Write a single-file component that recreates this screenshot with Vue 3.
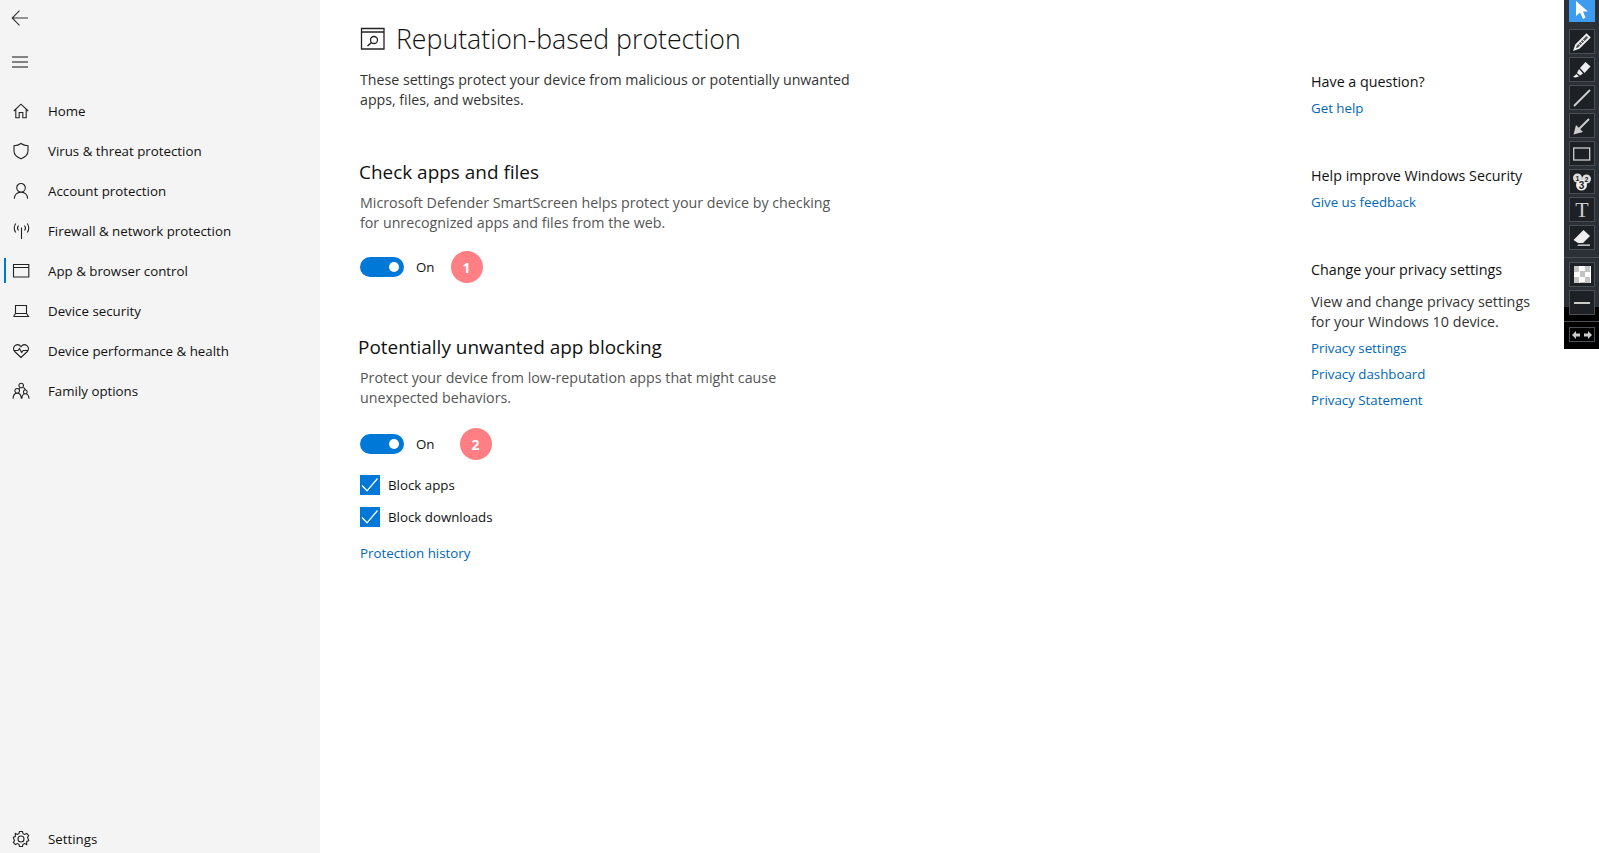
<script setup>
const navItems = [
  { label: "Home", icon: "home" },
  { label: "Virus & threat protection", icon: "shield" },
  { label: "Account protection", icon: "user" },
  { label: "Firewall & network protection", icon: "wifi" },
  { label: "App & browser control", icon: "app", active: true },
  { label: "Device security", icon: "laptop" },
  { label: "Device performance & health", icon: "heart" },
  { label: "Family options", icon: "family" },
];

const privacyLinks = ["Privacy settings", "Privacy dashboard", "Privacy Statement"];

const tools = ["pencil", "marker", "line", "arrow", "rect", "numbers", "text", "eraser"];
</script>

<template>
  <div class="page">
    <aside class="sidebar">
      <button class="top-btn back">
        <svg width="18" height="16" viewBox="0 0 18 16" fill="none" stroke="#333" stroke-width="1.1">
          <path d="M8.500 .7 1.200 8l7.300 7.300M1.200 8H17" />
        </svg>
      </button>
      <button class="top-btn burger">
        <svg width="18" height="12" viewBox="0 0 18 12" fill="none" stroke="#111" stroke-width="1.1">
          <path d="M1 1h16M1 6h16M1 11h16" />
        </svg>
      </button>
      <nav class="nav">
        <div v-for="item in navItems" :key="item.label" class="nav-row" :class="{ active: item.active }">
          <svg class="nav-icon" width="18" height="18" viewBox="0 0 18 18" fill="none" stroke="#222" stroke-width="1.1">
            <path v-if="item.icon === 'home'" d="M1.800 9 9 2.200 16.200 9M3.800 7.500V15.800H7.200V10.500H10.800V15.800H14.200V7.500" />
            <path v-else-if="item.icon === 'shield'" d="M9 1.500C11 3 13.500 3.700 16 3.700V9C16 12.800 13 15.200 9 16.800 5 15.200 2 12.800 2 9V3.700C4.500 3.700 7 3 9 1.500Z" />
            <path v-else-if="item.icon === 'user'" d="M9 1.500A4.300 4.300 0 1 1 9 10.100 4.300 4.300 0 1 1 9 1.500ZM2.300 16.800C2.500 12.800 5.200 10.100 9 10.100S15.500 12.800 15.700 16.800" />
            <path v-else-if="item.icon === 'wifi'" d="M9.500 5.500V17M6.500 3.500C5.300 5 5.300 7 6.500 8.500M12.500 3.500C13.700 5 13.700 7 12.500 8.500M3.800 1.500C1.700 4 1.700 8 3.800 10.500M15.200 1.500C17.300 4 17.300 8 15.200 10.500" />
            <path v-else-if="item.icon === 'app'" d="M1.500 2.500H16.800V15H1.500ZM1.500 5.500H16.800" />
            <path v-else-if="item.icon === 'laptop'" d="M3.500 3.500H14.500V11.500H3.500ZM1.500 14.500H16.500L14.500 11.500H3.500L1.500 14.500" />
            <path v-else-if="item.icon === 'heart'" d="M9 15.500 2.700 9.500C.8 7.500 1.300 4.500 3.500 3.200 5.500 2.100 7.700 2.800 9 4.700 10.300 2.800 12.500 2.100 14.500 3.200 16.700 4.500 17.200 7.500 15.300 9.500ZM1.500 8.500H6L7.500 6.500 9.700 10.500 11.200 8.500H16.500" />
            <path v-else-if="item.icon === 'family'" d="M9.200 1.200A2.300 2.300 0 1 1 9.200 5.800 2.300 2.300 0 1 1 9.200 1.200ZM5.200 6.500A2.300 2.300 0 1 1 5.200 11.100 2.300 2.300 0 1 1 5.200 6.500ZM13.300 8A1.900 1.900 0 1 1 13.300 11.800 1.900 1.900 0 1 1 13.300 8ZM1 16.800C1.200 13.300 2.800 11.100 5.200 11.100S9.200 13.300 9.400 16.800M9.800 16.800C10 13.800 11.200 11.800 13.300 11.800S16.800 13.800 17 16.800M7 6C7.300 6.500 7.500 7 7.500 7.500M11.500 5.500C12.500 6.300 13 7 13.300 8" />
          </svg>
          <span>{{ item.label }}</span>
        </div>
      </nav>
      <div class="nav-row settings">
        <svg class="nav-icon" width="18" height="18" viewBox="0 0 18 18" fill="none" stroke="#222" stroke-width="1.1">
          <path d="M7.500 1.500H10.500L11 3.700 12.700 4.500 14.700 3.400 16.700 5.500 15.500 7.400 16.200 9 16.700 10.700 14.700 11.400 14.700 14.600 12.700 13.500 11 14.300 10.500 16.500H7.500L7 14.300 5.300 13.500 3.300 14.600 1.300 12.500 2.500 10.600 1.800 9 1.300 7.300 3.300 6.600 3.300 3.400 5.300 4.500 7 3.700Z" />
          <circle cx="9" cy="9" r="3" />
        </svg>
        <span>Settings</span>
      </div>
    </aside>

    <main class="main">
      <div class="title-row">
        <svg width="26" height="24" viewBox="0 0 26 24" fill="none" stroke="#222" stroke-width="1.300">
          <path d="M1.500 1.500H24V22H1.500ZM1.500 5H24" />
          <circle cx="14" cy="13" r="3.500" />
          <path d="M11.500 15.500 7.500 19" stroke-width="1.600" />
        </svg>
        <h1>Reputation-based protection</h1>
      </div>
      <p class="desc intro">These settings protect your device from malicious or potentially unwanted<br />apps, files, and websites.</p>

      <h2 class="first">Check apps and files</h2>
      <p class="desc grey">Microsoft Defender SmartScreen helps protect your device by checking<br />for unrecognized apps and files from the web.</p>
      <div class="toggle-row">
        <span class="toggle"><i></i></span>
        <span class="on">On</span>
        <span class="badge">1</span>
      </div>

      <h2 class="second">Potentially unwanted app blocking</h2>
      <p class="desc grey">Protect your device from low-reputation apps that might cause<br />unexpected behaviors.</p>
      <div class="toggle-row lower">
        <span class="toggle"><i></i></span>
        <span class="on">On</span>
        <span class="badge two">2</span>
      </div>
      <div class="checks">
        <label v-for="c in ['Block apps', 'Block downloads']" :key="c" class="check">
          <span class="box">
            <svg width="20" height="20" viewBox="0 0 20 20" fill="none" stroke="#fff" stroke-width="1.300"><path d="M2 10.500 7 15.800 17.500 3.500" /></svg>
          </span>
          {{ c }}
        </label>
      </div>
      <a class="link history">Protection history</a>
    </main>

    <aside class="help">
      <div class="help-title">Have a question?</div>
      <a class="link">Get help</a>
      <div class="help-title gap">Help improve Windows Security</div>
      <a class="link">Give us feedback</a>
      <div class="help-title gap">Change your privacy settings</div>
      <p class="help-text">View and change privacy settings<br />for your Windows 10 device.</p>
      <a v-for="l in privacyLinks" :key="l" class="link plink">{{ l }}</a>
    </aside>

    <div class="toolbar">
      <div class="tool selected">
        <svg width="16" height="20" viewBox="0 0 16 20" fill="#fff"><path d="M2 0V15L6 11.500 9 18 11.500 16.500 9 10.500H14Z" /></svg>
      </div>
      <div v-for="t in tools" :key="t" class="tool" :class="'t-' + t">
        <svg v-if="t === 'pencil'" width="20" height="20" viewBox="0 0 20 20" fill="none" stroke="#eee" stroke-width="1.800"><path d="M2.500 17.500 4 13 14.500 2.500 17.500 5.500 7 16Z" fill="#555" /><path d="M6 11 9 14M8 9 11 12M10 7 13 10" stroke-width="1" /></svg>
        <svg v-else-if="t === 'marker'" width="20" height="20" viewBox="0 0 20 20" fill="#eee"><path d="M8 8 13.500 2 18.500 6.500 12.500 13Z" /><path d="M7 9 11 13.500 8 15.500 5 13ZM4.500 14 7 16.500 3.500 17.500 1 17Z" /></svg>
        <svg v-else-if="t === 'line'" width="20" height="20" viewBox="0 0 20 20" stroke="#ccc" stroke-width="2"><path d="M2 18 18 2" /></svg>
        <svg v-else-if="t === 'arrow'" width="20" height="20" viewBox="0 0 20 20" fill="#ccc" stroke="#ccc"><path d="M17 3 6 14" stroke-width="2" /><path d="M1.500 18.500 4 9 11 16Z" stroke="none" /></svg>
        <svg v-else-if="t === 'rect'" width="18" height="14" viewBox="0 0 18 14" fill="none" stroke="#ccc" stroke-width="1.300"><rect x=".7" y="1" width="16" height="12" /></svg>
        <svg v-else-if="t === 'numbers'" width="20" height="20" viewBox="0 0 20 20" class="num-icon">
          <circle cx="5.500" cy="6" r="4.500" fill="#ddd" />
          <circle cx="14.500" cy="7" r="4.500" fill="#ddd" />
          <circle cx="9.500" cy="13" r="5.500" fill="#eee" />
          <text x="5.500" y="9">1</text>
          <text x="14.500" y="10">2</text>
          <text x="9.500" y="17" class="big">3</text>
        </svg>
        <span v-else-if="t === 'text'" class="tool-t">T</span>
        <svg v-else-if="t === 'eraser'" width="20" height="20" viewBox="0 0 20 20" fill="#eee"><path d="M1.500 12 11.500 2 18 8 11 15H6Z" /><path d="M6.500 16.500H18V17.800H5Z" /></svg>
      </div>
      <div class="sep"></div>
      <div class="tool">
        <span class="checker"></span>
      </div>
      <div class="tool">
        <span class="dash"></span>
      </div>
      <div class="sep low"></div>
      <div class="tool small">
        <svg width="20" height="8" viewBox="0 0 20 8" fill="#ccc"><path d="M0 4 4 0V2.500H8V5.500H4V8ZM20 4 16 0V2.500H12V5.500H16V8Z" /></svg>
      </div>
    </div>
  </div>
</template>

<style scoped>
.page {
  display: flex;
  position: relative;
  width: 1599px;
  height: 853px;
  overflow: hidden;
  background: #fff;
  color: #000;
  font-family: "Open Sans", "Liberation Sans", sans-serif;
  font-size: 13.300px;
}

.sidebar {
  width: 320px;
  flex: none;
  display: flex;
  flex-direction: column;
  background: #f4f4f4;
}
.top-btn {
  display: flex;
  align-items: center;
  padding: 0 0 0 11px;
  border: 0;
  background: none;
}
.back {
  height: 36px;
}
.burger {
  height: 16px;
  margin-top: 18px;
}
.nav {
  margin-top: 21px;
}
.nav-row {
  position: relative;
  display: flex;
  align-items: center;
  height: 40px;
  padding-left: 12px;
  color: #111;
}
.nav-row span {
  padding-bottom: 1px;
}
.nav-row.active::before {
  content: "";
  position: absolute;
  left: 4px;
  top: 7px;
  width: 2px;
  height: 25px;
  background: #0078d7;
}
.nav-icon {
  flex: none;
  margin-right: 18px;
}
.settings {
  margin-top: auto;
  margin-bottom: -6px;
}

.main {
  flex: 1;
  padding: 0 0 0 40px;
}
.title-row {
  display: flex;
  align-items: center;
  height: 78px;
  gap: 10px;
}
h1 {
  margin: -2px 0 0;
  font-size: 26.700px;
  font-weight: 300;
  color: #111;
}
h2 {
  margin: 0;
  font-size: 18.950px;
  font-weight: 400;
  line-height: 28px;
  color: #111;
}
.first {
  margin-top: 48px;
  margin-left: -1px;
}
.second {
  margin-top: 50px;
  margin-left: -2px;
}
.desc {
  margin: 0;
  font-size: 14.200px;
  line-height: 20px;
  color: #333;
}
.intro {
  margin-top: -8px;
}
.grey {
  margin-top: 7px;
  color: #555;
  font-size: 14.250px;
}
.toggle-row {
  display: flex;
  align-items: center;
  height: 32px;
  margin-top: 18px;
}
.toggle-row.lower {
  margin-top: 20px;
}
.toggle {
  display: flex;
  align-items: center;
  justify-content: flex-end;
  width: 44px;
  height: 20px;
  padding-right: 5px;
  box-sizing: border-box;
  border-radius: 10px;
  background: #0078d7;
}
.toggle i {
  width: 10px;
  height: 10px;
  border-radius: 50%;
  background: #fff;
}
.on {
  margin-left: 12px;
  color: #111;
}
.badge {
  display: flex;
  align-items: center;
  justify-content: center;
  width: 32px;
  height: 32px;
  margin-left: 16px;
  border-radius: 50%;
  background: #ff7f85;
  color: #fff;
  font-size: 14px;
  font-weight: 700;
}
.badge.two {
  margin-left: 25px;
}
.checks {
  margin-top: 9px;
}
.check {
  display: flex;
  align-items: center;
  height: 32px;
  color: #111;
}
.box {
  display: flex;
  width: 20px;
  height: 20px;
  margin-right: 8px;
  background: #0078d7;
}
.link {
  display: block;
  color: #0067b8;
}
.history {
  margin-top: 11px;
}

.help {
  width: 288px;
  flex: none;
  padding-top: 72px;
  box-sizing: border-box;
  font-size: 14.300px;
}
.help-title {
  line-height: 20px;
  color: #111;
}
.help-title.gap {
  margin-top: 48px;
}
.help .link {
  margin-top: 6px;
  line-height: 20px;
  font-size: 13.300px;
}
.help-text {
  margin: 12px 0 0;
  line-height: 19.500px;
  color: #333;
}
.help .plink {
  margin-top: 6px;
}
.help .help-text + .plink {
  margin-top: 7px;
}

.toolbar {
  position: absolute;
  top: 0;
  right: 0;
  width: 35px;
  height: 349px;
  padding: 0 4px 0 5px;
  box-sizing: border-box;
  display: flex;
  flex-direction: column;
  align-items: stretch;
  background: linear-gradient(#2b3036 0, #2b3036 307px, #000 307px);
}
.tool {
  display: flex;
  align-items: center;
  justify-content: center;
  flex: none;
  height: 25px;
  margin-bottom: 3px;
  border: 1px solid #4a4f55;
  box-sizing: border-box;
  background: #1d2025;
}
.tool.selected {
  height: 22px;
  margin-bottom: 7px;
  border: 0;
  background: #3d9bf0;
}
.tool-t {
  color: #ccc;
  font-family: "Liberation Serif", serif;
  font-size: 22px;
}
.num-icon text {
  fill: #222;
  font-family: "Liberation Sans", sans-serif;
  font-size: 7px;
  font-weight: 700;
  text-anchor: middle;
}
.num-icon text.big {
  font-size: 10px;
}
.sep {
  flex: none;
  height: 1px;
  margin: 4px -5px 4px;
  background: #4a4f55;
}
.sep.low {
  margin: 3px -5px 5px;
}
.checker {
  width: 17px;
  height: 17px;
  background: repeating-conic-gradient(#fff 0 25%, #c4c4c4 0 50%) 0 0 / 11px 11px;
}
.dash {
  width: 16px;
  height: 2px;
  background: #ccc;
}
.tool.small {
  height: 15px;
  background: #000;
}
</style>

<style>
html,
body {
  margin: 0;
  background: #fff;
}
</style>
